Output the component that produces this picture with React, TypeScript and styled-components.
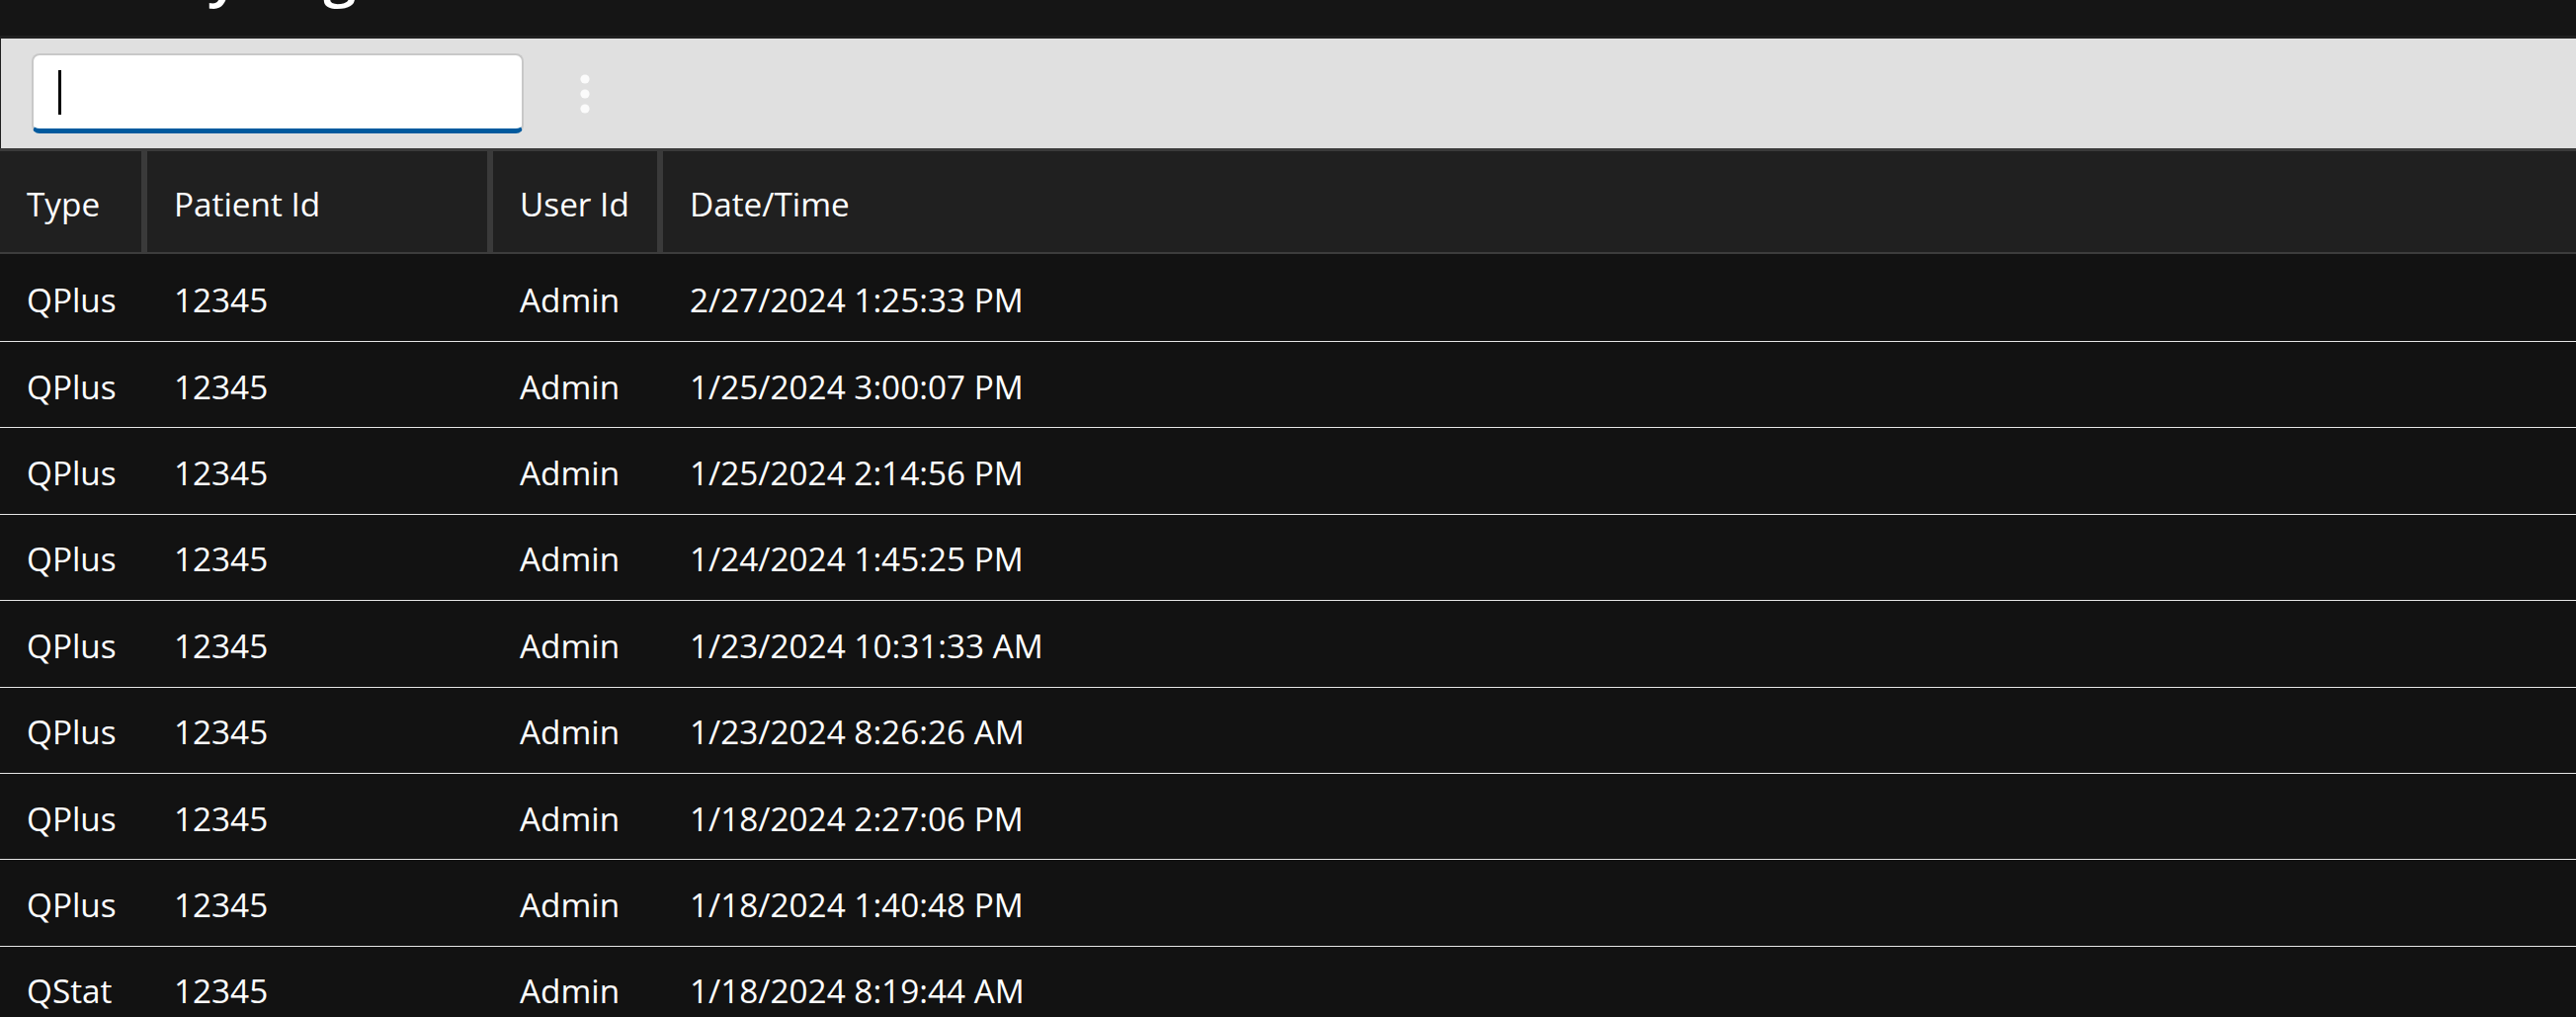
import React from "react";
import styled, { createGlobalStyle } from "styled-components";

const GlobalStyle = createGlobalStyle`
  html, body {
    margin: 0;
    padding: 0;
    background: #121212;
  }
  body {
    font-family: "Open Sans", "Noto Sans", "Liberation Sans", sans-serif;
    color: #ffffff;
  }
  * { box-sizing: border-box; }
`;

const Page = styled.div`
  display: flex;
  flex-direction: column;
  width: 100%;
  height: 1029px;
  overflow: hidden;
  background: #121212;
`;

const TitleBar = styled.header`
  height: 39px;
  flex: none;
  background: #151515;
  border-bottom: 3px solid #1f1f1f;
  overflow: hidden;
  display: flex;
  align-items: flex-start;
  padding-left: 28px;
`;

const Title = styled.h1`
  margin: -58px 0 0 0;
  font-size: 60px;
  line-height: 60px;
  font-weight: 600;
  color: #ffffff;
  white-space: nowrap;
`;

const Toolbar = styled.div`
  height: 111px;
  flex: none;
  background: #e0e0e0;
  border-left: 1px solid #1f1f1f;
  display: flex;
  align-items: center;
  padding-left: 31px;
`;

const TextBox = styled.div`
  width: 498px;
  height: 81px;
  background: #ffffff;
  border: 2px solid #c8c8c8;
  border-bottom: 5px solid #005a9e;
  border-radius: 8px;
  display: flex;
  align-items: center;
  padding-left: 25px;
`;

const Caret = styled.span`
  display: block;
  width: 3px;
  height: 45px;
  background: #000000;
`;

const MoreButton = styled.button`
  margin-left: 42px;
  width: 40px;
  height: 60px;
  border: none;
  background: transparent;
  padding: 0;
  display: flex;
  align-items: center;
  justify-content: center;
  cursor: pointer;
  svg { filter: blur(0.6px); }
`;

const Table = styled.div`
  display: flex;
  flex-direction: column;
  border-top: 3px solid #3a3a3a;
`;

const columns = "143px 344px 166px 1fr";

const HeaderRow = styled.div`
  display: grid;
  grid-template-columns: ${columns};
  column-gap: 6px;
  background: #3a3a3a;
  height: 104px;
  border-bottom: 2px solid #3c3c3c;
`;

const HeaderCell = styled.div`
  background: #202020;
  display: flex;
  align-items: center;
  padding: 3px 0 0 27px;
  font-size: 33.3px;
  color: #ffffff;
  white-space: nowrap;
`;

const Row = styled.div<{ $first?: boolean }>`
  display: grid;
  grid-template-columns: ${columns};
  column-gap: 6px;
  height: ${(p) => (p.$first ? "89px" : "87.4px")};
  border-bottom: 1px solid #e6e6e6;
  background: #121212;
`;

const Cell = styled.div`
  display: flex;
  align-items: center;
  padding: 3px 0 0 27px;
  font-size: 33.3px;
  color: #ffffff;
  white-space: nowrap;
`;

const rows = [
  ["QPlus", "12345", "Admin", "2/27/2024 1:25:33 PM"],
  ["QPlus", "12345", "Admin", "1/25/2024 3:00:07 PM"],
  ["QPlus", "12345", "Admin", "1/25/2024 2:14:56 PM"],
  ["QPlus", "12345", "Admin", "1/24/2024 1:45:25 PM"],
  ["QPlus", "12345", "Admin", "1/23/2024 10:31:33 AM"],
  ["QPlus", "12345", "Admin", "1/23/2024 8:26:26 AM"],
  ["QPlus", "12345", "Admin", "1/18/2024 2:27:06 PM"],
  ["QPlus", "12345", "Admin", "1/18/2024 1:40:48 PM"],
  ["QStat", "12345", "Admin", "1/18/2024 8:19:44 AM"],
];

const headers = ["Type", "Patient Id", "User Id", "Date/Time"];

export default function App() {
  return (
    <Page>
      <GlobalStyle />
      <TitleBar>
        <Title>Activity Log</Title>
      </TitleBar>
      <Toolbar>
        <TextBox>
          <Caret />
        </TextBox>
        <MoreButton aria-label="More options">
          <svg width="12" height="44" viewBox="0 0 12 44">
            <circle cx="6" cy="7" r="4.6" fill="#fbfbfb" />
            <circle cx="6" cy="22" r="4.6" fill="#fbfbfb" />
            <circle cx="6" cy="37" r="4.6" fill="#fbfbfb" />
          </svg>
        </MoreButton>
      </Toolbar>
      <Table>
        <HeaderRow>
          {headers.map((h) => (
            <HeaderCell key={h}>{h}</HeaderCell>
          ))}
        </HeaderRow>
        {rows.map((r, i) => (
          <Row key={i} $first={i === 0}>
            {r.map((c, j) => (
              <Cell key={j}>{c}</Cell>
            ))}
          </Row>
        ))}
      </Table>
    </Page>
  );
}
